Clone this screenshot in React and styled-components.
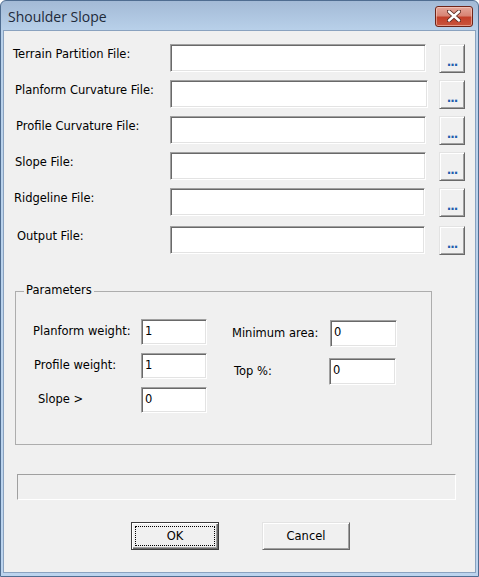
import React from "react"
import styled, { createGlobalStyle } from "styled-components"

const GlobalStyle = createGlobalStyle`
	html, body {
		margin: 0;
		padding: 0;
		background: #ffffff;
	}
	* {
		box-sizing: border-box;
	}
`

const Window = styled.div`
	width: 479px;
	height: 577px;
	display: flex;
	flex-direction: column;
	background: linear-gradient(#a3bad6 0px, #b9d1ea 30px, #bcd4ee 100%);
	border: 1px solid #4f6d91;
	border-radius: 6px 6px 0 0;
	padding: 0 2px 3px 2px;
`

const TitleBar = styled.div`
	height: 29px;
	display: flex;
	align-items: center;
	justify-content: space-between;
	padding: 0 3px 0 5px;
`

const Title = styled.span`
	font-family: "Open Sans", "Noto Sans", sans-serif;
	font-size: 14px;
	color: #1e2a3a;
	margin-top: 2px;
`

const CloseButton = styled.button`
	width: 38px;
	height: 21px;
	margin-top: 1px;
	border: 1px solid #6e2418;
	border-radius: 3px;
	background: linear-gradient(#e4a699 0%, #d88575 45%, #c3402a 55%, #c9553d 100%);
	box-shadow: inset 0 0 0 1px rgba(255, 220, 210, 0.5);
	display: flex;
	align-items: center;
	justify-content: center;
	padding: 0;
`

const Client = styled.div`
	flex: 1;
	background: #f0f0f0;
	border: 1px solid #8aa2bf;
	display: flex;
	flex-direction: column;
`

const FileList = styled.div`
	display: flex;
	flex-direction: column;
	gap: 7px;
	margin-top: 13px;
`

const FileRow = styled.div`
	display: grid;
	grid-template-columns: 166px 269px 26px;
	align-items: start;
	height: 29px;
	margin-top: ${(p) => (p.$extra ? p.$extra : 0)}px;
`

const Label = styled.span`
	font-family: "DejaVu Sans", sans-serif;
	font-size: 11.5px;
	color: #000;
	white-space: nowrap;
`

const FileLabel = styled(Label)`
	padding-left: ${(p) => p.$indent}px;
	padding-top: 3px;
`

const TextBox = styled.div`
	width: ${(p) => p.$w}px;
	height: ${(p) => p.$h}px;
	background: #ffffff;
	border-style: solid;
	border-width: 1px;
	border-color: #a0a0a0 #ffffff #ffffff #a0a0a0;
	box-shadow: inset 1px 1px 0 #696969, inset -1px -1px 0 #e3e3e3;
	font-family: "DejaVu Sans", sans-serif;
	font-size: 11.5px;
	padding: 4px 0 0 3px;
	color: #000;
`

const BrowseButton = styled.button`
	width: 26px;
	height: 29px;
	background: #f0f0f0;
	border-style: solid;
	border-width: 1px;
	border-color: #e3e3e3 #696969 #696969 #e3e3e3;
	box-shadow: inset 1px 1px 0 #ffffff, inset -1px -1px 0 #a0a0a0;
	font-family: "DejaVu Sans", sans-serif;
	font-size: 12px;
	font-weight: bold;
	color: #1f5fae;
	padding: 6px 0 0 0;
	letter-spacing: -1px;
`

const GroupBox = styled.div`
	position: relative;
	margin: 36px 0 0 11px;
	width: 417px;
	height: 154px;
	border: 1px solid #adadad;
	display: flex;
	padding: 27px 0 0 0;
`

const Legend = styled.span`
	position: absolute;
	top: -9px;
	left: 8px;
	padding: 0 2px;
	background: #f0f0f0;
	font-family: "DejaVu Sans", sans-serif;
	font-size: 11.5px;
`

const ParamColumn = styled.div`
	display: flex;
	flex-direction: column;
	gap: ${(p) => p.$gap}px;
	margin-top: ${(p) => p.$top || 0}px;
`

const ParamRow = styled.div`
	display: flex;
	align-items: center;
`

const ParamLabel = styled(Label)`
	width: ${(p) => p.$w}px;
	padding-left: ${(p) => p.$indent}px;
	margin-top: -2px;
`

const StatusBar = styled.div`
	margin: 29px 0 0 13px;
	width: 439px;
	height: 26px;
	border-style: solid;
	border-width: 1px;
	border-color: #a0a0a0 #ffffff #ffffff #a0a0a0;
`

const ButtonRow = styled.div`
	display: flex;
	gap: 43px;
	margin: 22px 0 0 127px;
`

const DialogButton = styled.button`
	width: 88px;
	height: 28px;
	background: #f0f0f0;
	border-style: solid;
	border-width: 1px;
	border-color: ${(p) => (p.$default ? "#3c3c3c" : "#e3e3e3 #696969 #696969 #e3e3e3")};
	box-shadow: ${(p) =>
		p.$default
			? "inset 1px 1px 0 #ffffff, inset -1px -1px 0 #696969, inset -2px -2px 0 #a0a0a0"
			: "inset 1px 1px 0 #ffffff, inset -1px -1px 0 #a0a0a0"};
	font-family: "DejaVu Sans", sans-serif;
	font-size: 11.5px;
	color: #000;
	padding: 3px;
`

const FocusRing = styled.span`
	display: flex;
	align-items: center;
	justify-content: center;
	width: 100%;
	height: 100%;
	border: 1px dotted #000;
`

const files = [
	{ label: "Terrain Partition File:", indent: 9, w: 256 },
	{ label: "Planform Curvature File:", indent: 11, w: 258 },
	{ label: "Profile Curvature File:", indent: 12, w: 256 },
	{ label: "Slope File:", indent: 11, w: 256 },
	{ label: "Ridgeline File:", indent: 10, w: 255 },
	{ label: "Output File:", indent: 13, w: 255, extra: 2 },
]

function CloseIcon() {
	return (
		<svg width="14" height="12" viewBox="0 0 14 12">
			<path d="M2 1.5 L12 10.5 M12 1.5 L2 10.5" stroke="#5a2a22" strokeWidth="4.2" strokeLinecap="round" />
			<path d="M2 1.5 L12 10.5 M12 1.5 L2 10.5" stroke="#ffffff" strokeWidth="2.4" strokeLinecap="round" />
		</svg>
	)
}

export default function App() {
	return (
		<>
			<GlobalStyle />
			<Window>
				<TitleBar>
					<Title>Shoulder Slope</Title>
					<CloseButton>
						<CloseIcon />
					</CloseButton>
				</TitleBar>
				<Client>
					<FileList>
						{files.map((f) => (
							<FileRow key={f.label} $extra={f.extra}>
								<FileLabel $indent={f.indent}>{f.label}</FileLabel>
								<TextBox $w={f.w} $h={28} />
								<BrowseButton>...</BrowseButton>
							</FileRow>
						))}
					</FileList>

					<GroupBox>
						<Legend>Parameters</Legend>
						<ParamColumn $gap={8}>
							<ParamRow>
								<ParamLabel $w={125} $indent={17}>Planform weight:</ParamLabel>
								<TextBox $w={66} $h={26}>1</TextBox>
							</ParamRow>
							<ParamRow>
								<ParamLabel $w={125} $indent={18}>Profile weight:</ParamLabel>
								<TextBox $w={66} $h={26}>1</TextBox>
							</ParamRow>
							<ParamRow>
								<ParamLabel $w={125} $indent={22}>Slope &gt;</ParamLabel>
								<TextBox $w={66} $h={26}>0</TextBox>
							</ParamRow>
						</ParamColumn>
						<ParamColumn $gap={11} $top={1}>
							<ParamRow>
								<ParamLabel $w={123} $indent={25}>Minimum area:</ParamLabel>
								<TextBox $w={67} $h={27}>0</TextBox>
							</ParamRow>
							<ParamRow>
								<ParamLabel $w={122} $indent={27}>Top %:</ParamLabel>
								<TextBox $w={67} $h={27}>0</TextBox>
							</ParamRow>
						</ParamColumn>
					</GroupBox>

					<StatusBar />

					<ButtonRow>
						<DialogButton $default>
							<FocusRing>OK</FocusRing>
						</DialogButton>
						<DialogButton>Cancel</DialogButton>
					</ButtonRow>
				</Client>
			</Window>
		</>
	)
}
